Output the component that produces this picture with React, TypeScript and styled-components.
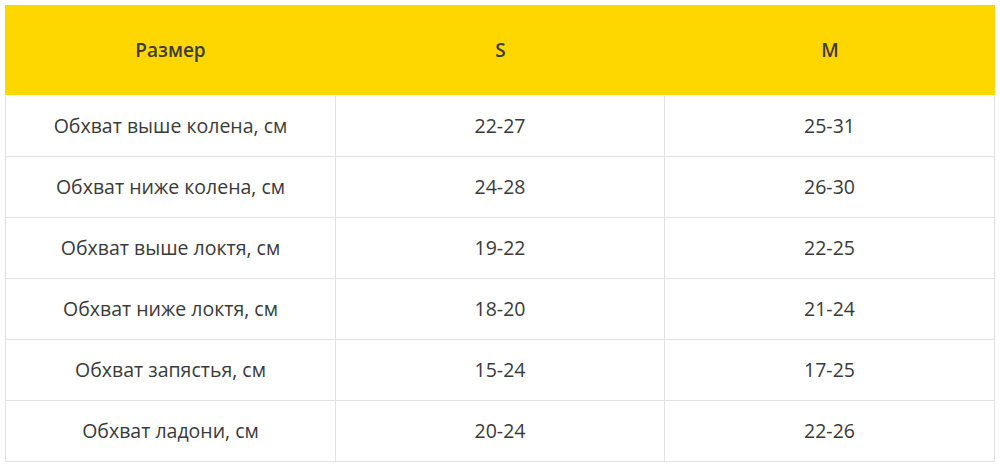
import React from "react";
import styled, { createGlobalStyle } from "styled-components";

const GlobalStyle = createGlobalStyle`
  html, body {
    margin: 0;
    padding: 0;
    background: #ffffff;
  }
  body {
    font-family: "Open Sans", "Liberation Sans", sans-serif;
  }
`;

const Page = styled.div`
  padding: 5px;
`;

const Table = styled.table`
  width: 990px;
  table-layout: fixed;
  border-collapse: separate;
  border-spacing: 0;
  font-family: "Open Sans", "Liberation Sans", sans-serif;
`;

const HeadCell = styled.th<{ $w: number }>`
  box-sizing: border-box;
  width: ${(p) => p.$w}px;
  height: 91px;
  padding: 0 0 1px;
  background: #ffd700;
  background-clip: padding-box;
  color: #3c3c3c;
  font-size: 19px;
  font-weight: 600;
  text-align: center;
  vertical-align: middle;
  border: none;
  border-bottom: 1px solid #ffffff;
`;

const Cell = styled.td<{ $first?: boolean }>`
  box-sizing: border-box;
  height: 61px;
  padding: 0 0 1px;
  color: #3a3a3a;
  font-size: 19.5px;
  font-weight: 400;
  text-align: center;
  vertical-align: middle;
  border-right: 1px solid #e2e2e2;
  border-bottom: 1px solid #e2e2e2;
  border-left: ${(p) => (p.$first ? "1px solid #e2e2e2" : "none")};
`;

const rows: [string, string, string][] = [
  ["Обхват выше колена, см", "22-27", "25-31"],
  ["Обхват ниже колена, см", "24-28", "26-30"],
  ["Обхват выше локтя, см", "19-22", "22-25"],
  ["Обхват ниже локтя, см", "18-20", "21-24"],
  ["Обхват запястья, см", "15-24", "17-25"],
  ["Обхват ладони, см", "20-24", "22-26"],
];

export default function App() {
  return (
    <>
      <GlobalStyle />
      <Page>
        <Table>
          <thead>
            <tr>
              <HeadCell $w={331}>Размер</HeadCell>
              <HeadCell $w={329}>S</HeadCell>
              <HeadCell $w={330}>M</HeadCell>
            </tr>
          </thead>
          <tbody>
            {rows.map((r) => (
              <tr key={r[0]}>
                <Cell $first>{r[0]}</Cell>
                <Cell>{r[1]}</Cell>
                <Cell>{r[2]}</Cell>
              </tr>
            ))}
          </tbody>
        </Table>
      </Page>
    </>
  );
}
